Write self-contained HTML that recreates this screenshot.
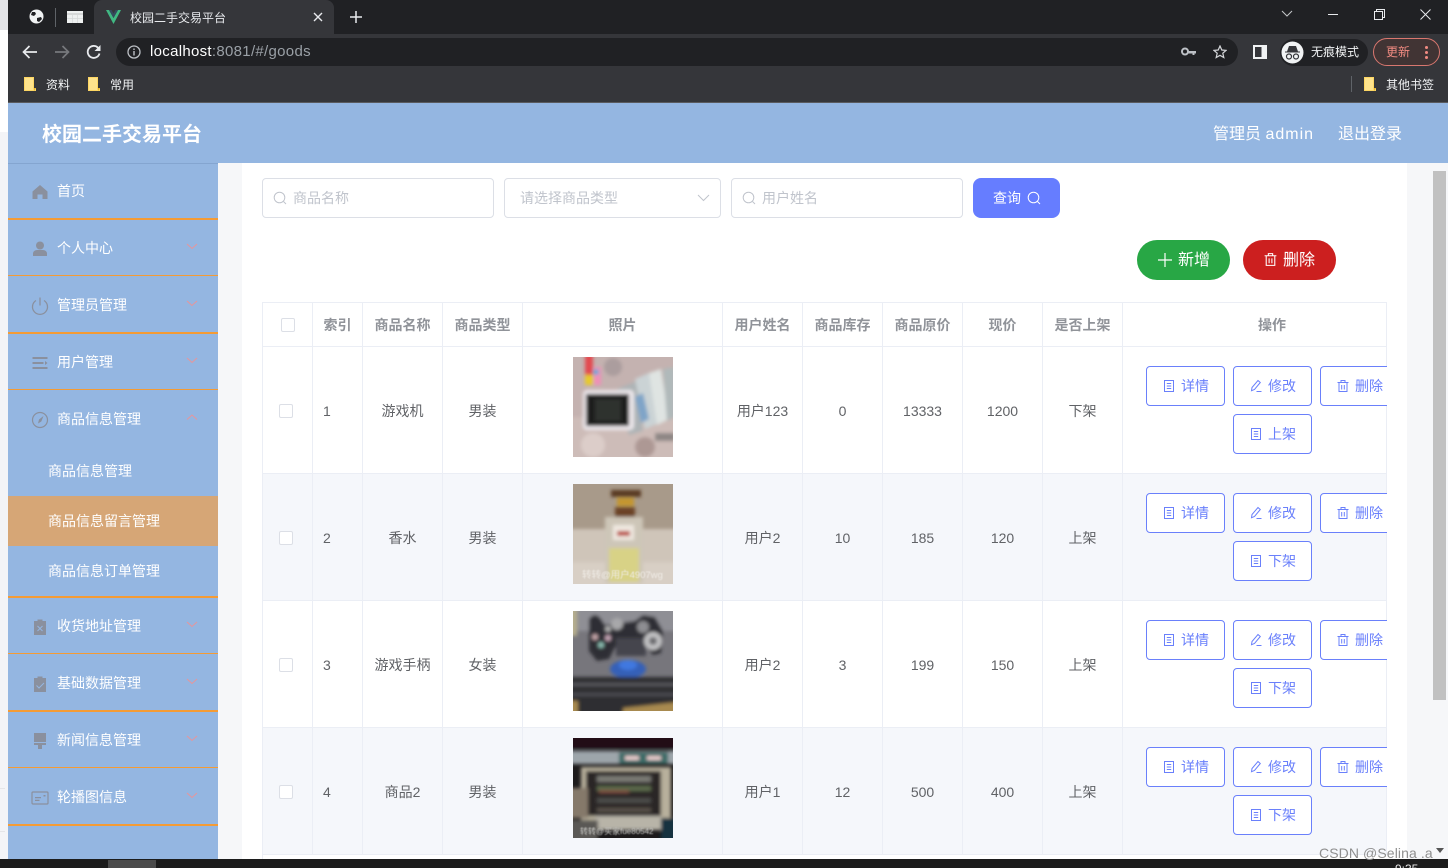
<!DOCTYPE html>
<html lang="zh"><head><meta charset="utf-8"><title>校园二手交易平台</title>
<style>
*{box-sizing:border-box}
html,body{margin:0;padding:0;width:1448px;height:868px;overflow:hidden;background:#f6f7f9;font-family:"Liberation Sans","Noto Sans CJK SC",sans-serif;color:#606266}
body{position:relative}
.a{position:absolute}
.t{position:absolute;white-space:nowrap}
.m{position:absolute;left:8px;width:210px;color:#fff;font-size:14px;height:20px;line-height:20px;white-space:nowrap}
.m span{position:absolute;left:49px;top:0}
.m svg.i{position:absolute;left:23px;top:2px;width:18px;height:18px;fill:#8a909e}
.m svg.ar{position:absolute;left:177px;top:1px;width:14px;height:14px;fill:none;stroke:#e8959a;stroke-width:1}
.ln{position:absolute;left:8px;width:210px;background:#f49b34}
.sub{position:absolute;left:8px;width:210px;height:50px;line-height:50px;padding-left:40px;color:#fff;font-size:14px}
.inp{position:absolute;top:178px;height:40px;border:1px solid #dcdfe6;border-radius:4px;background:#fff;color:#c0c4cc;font-size:14px;line-height:38px}
.th,.td{position:absolute;top:0;text-align:center;border-right:1px solid #ebeef5;font-size:14px}
.th{height:44px;line-height:45px;font-weight:700;color:#909399}
.td{height:127px;line-height:129px;color:#606266}
.row{position:absolute;left:263px;width:1124px;height:127px;border-bottom:1px solid #ebeef5;overflow:hidden}
.alt{background:#f5f7fb}
.w1{left:0;width:50px}.w2{left:50px;width:50px}.w3{left:100px;width:80px}.w4{left:180px;width:80px}.w5{left:260px;width:200px}.w6{left:460px;width:80px}.w7{left:540px;width:80px}.w8{left:620px;width:80px}.w9{left:700px;width:80px}.w10{left:780px;width:80px}.w11{left:860px;width:264px}
.cb{position:absolute;left:16px;top:57px;width:14px;height:14px;border:1px solid #dcdfe6;border-radius:2px;background:#fff}
.btn{position:absolute;width:79px;height:40px;border:1px solid #6a80fb;border-radius:4px;background:#fff;color:#6a80fb;font-size:14px;line-height:39px;white-space:nowrap}
.btn svg{position:absolute;left:15px;top:12px;width:14px;height:14px;fill:none;stroke:#6a80fb;stroke-width:1}
.btn span{position:absolute;left:34px;top:0}
.b1{left:883px;top:19px}.b2{left:970px;top:19px}.b3{left:1057px;top:19px}.b4{left:970px;top:67px}
.pic{position:absolute;left:310px;top:10px;width:100px;height:100px}
</style></head><body>
<svg width="0" height="0" style="position:absolute">
<defs>
<symbol id="doc" viewBox="0 0 14 14"><path d="M2.500 1.500h9v11h-9zM4.800 4.500h4.400M4.800 7h4.400M4.800 9.500h4.400"/></symbol>
<symbol id="pen" viewBox="0 0 14 14"><path d="M9 1.500l2.300 2-5.800 7-3 1.200.5-3.200zM7.500 12.500h5"/></symbol>
<symbol id="bin" viewBox="0 0 14 14"><path d="M1.500 3.500h11M3 3.500v9h8v-9M5 3.500V1.500h4v2M5.700 6v4.500M8.300 6v4.500"/></symbol>
<filter id="bl" x="-5%" y="-5%" width="110%" height="110%"><feGaussianBlur stdDeviation="1.900"/></filter>
<filter id="bt" x="-5%" y="-20%" width="110%" height="140%"><feGaussianBlur stdDeviation=".4"/></filter>
<clipPath id="cp"><rect width="100" height="100"/></clipPath>
</defs></svg>

<!-- outer strip -->
<div class="a" style="left:0;top:0;width:8px;height:868px;background:#f3f4f7"></div>
<div class="a" style="left:0;top:0;width:8px;height:30px;background:#e4e5e8"></div>
<div class="a" style="left:0;top:30px;width:8px;height:102px;background:#fff"></div>
<div class="a" style="left:0;top:788px;width:5px;height:1px;background:#e4e5e8"></div>
<div class="a" style="left:0;top:831px;width:5px;height:1px;background:#e4e5e8"></div>

<!-- browser chrome -->
<div class="a" style="left:8px;top:0;width:1440px;height:34px;background:#202124"></div>
<div class="a" style="left:8px;top:34px;width:1440px;height:68px;background:#35363a"></div>
<div class="a" style="left:8px;top:102px;width:1440px;height:1px;background:#5a5b5f"></div>
<div class="a" style="left:94px;top:0;width:240px;height:34px;background:#35363a;border-radius:8px 8px 0 0"></div>
<svg class="a" style="left:29px;top:9px" width="15" height="15" viewBox="0 0 15 15"><circle cx="7.500" cy="7.500" r="7" fill="#f1f3f4"/><path d="M3 3l3 0 1 2-2 2-3-1zM8 9l4-1 1 2-3 3-2-1z" fill="#202124"/></svg>
<div class="a" style="left:55px;top:8px;width:1px;height:19px;background:#5f6368"></div>
<svg class="a" style="left:67px;top:11px" width="16" height="12" viewBox="0 0 16 12"><rect width="16" height="12" fill="#eef0f0"/><path d="M0 3h16" stroke="#bdbfc1" stroke-width="1"/><path d="M5.500 3v9M10.500 3v9M0 7.500h16" stroke="#d5d7d8" stroke-width=".7"/></svg>
<svg class="a" style="left:106px;top:10px" width="15" height="14" viewBox="0 0 15 14"><path d="M0 0h3l4.500 8L12 0h3L7.500 14z" fill="#41b883"/><path d="M3 0h2.500l2 3.500L9.500 0H12L7.500 8z" fill="#35495e"/></svg>
<div class="t" style="left:130px;top:9px;font-size:12px;line-height:18px;color:#e8eaed;">校园二手交易平台</div>
<svg class="a" style="left:313px;top:12px" width="10" height="10" viewBox="0 0 10 10"><path d="M1 1l8 8M9 1l-8 8" stroke="#e8eaed" stroke-width="1.400"/></svg>
<svg class="a" style="left:350px;top:11px" width="12" height="12" viewBox="0 0 12 12"><path d="M6 0v12M0 6h12" stroke="#e8eaed" stroke-width="1.500"/></svg>
<svg class="a" style="left:22px;top:44px" width="16" height="16" viewBox="0 0 16 16"><path d="M15 8H2M7.500 2L1.500 8l6 6" fill="none" stroke="#e8eaed" stroke-width="1.700"/></svg>
<svg class="a" style="left:54px;top:44px" width="16" height="16" viewBox="0 0 16 16"><path d="M1 8h13M8.500 2l6 6-6 6" fill="none" stroke="#77797d" stroke-width="1.700"/></svg>
<svg class="a" style="left:86px;top:44px" width="16" height="16" viewBox="0 0 16 16"><path d="M13.500 9.500A6 6 0 1 1 12 3.700" fill="none" stroke="#e8eaed" stroke-width="1.800"/><path d="M14.500 1v6h-6z" fill="#e8eaed"/></svg>
<div class="a" style="left:116px;top:38px;width:1122px;height:28px;border-radius:14px;background:#202124"></div>
<svg class="a" style="left:127px;top:45px" width="14" height="14" viewBox="0 0 14 14"><circle cx="7" cy="7" r="6" fill="none" stroke="#bdc1c6" stroke-width="1.300"/><path d="M7 6v4.500M7 3.500v1.500" stroke="#bdc1c6" stroke-width="1.400"/></svg>
<div class="t" style="left:150px;top:43px;font-size:15px;line-height:18px;color:#9aa0a6;letter-spacing:.3px"><span style="color:#fff">localhost</span>:8081/#/goods</div>
<svg class="a" style="left:1181px;top:47px" width="15" height="9" viewBox="0 0 15 9"><circle cx="4" cy="4.500" r="3" fill="none" stroke="#bdc1c6" stroke-width="2"/><path d="M7 4h8v2.500h-1.500v1.500h-2V6.500H7z" fill="#bdc1c6"/></svg>
<svg class="a" style="left:1213px;top:45px" width="14" height="14" viewBox="0 0 14 14"><path d="M7 1l1.800 4 4.200.4-3.200 2.800 1 4.300L7 10.300 3.200 12.500l1-4.300L1 5.400 5.200 5z" fill="none" stroke="#d5d7da" stroke-width="1.200"/></svg>
<svg class="a" style="left:1253px;top:45px" width="14" height="14" viewBox="0 0 14 14"><rect width="14" height="14" fill="#f1f3f4"/><rect x="2" y="2" width="6.500" height="10" fill="#35363a"/></svg>
<div class="a" style="left:1280px;top:39px;width:88px;height:27px;border-radius:14px;background:#202124"></div>
<svg class="a" style="left:1281px;top:41px" width="23" height="23" viewBox="0 0 23 23"><circle cx="11.500" cy="11.500" r="11" fill="#f1f3f4"/><path d="M6 10.500l2-5.500h7l2 5.500h2v1H4v-1z" fill="#35363a"/><circle cx="8" cy="15.500" r="2.500" fill="none" stroke="#35363a" stroke-width="1.200"/><circle cx="15" cy="15.500" r="2.500" fill="none" stroke="#35363a" stroke-width="1.200"/></svg>
<div class="t" style="left:1311px;top:44px;font-size:12px;line-height:17px;color:#f1f3f4">无痕模式</div>
<div class="a" style="left:1373px;top:38px;width:67px;height:28px;border-radius:14px;border:1px solid #d9776f;background:#413434"></div>
<div class="t" style="left:1386px;top:44px;font-size:12px;line-height:17px;color:#f28b82">更新</div>
<div class="a" style="left:1425px;top:46px;width:3px;height:3px;border-radius:2px;background:#f28b82"></div>
<div class="a" style="left:1425px;top:51px;width:3px;height:3px;border-radius:2px;background:#f28b82"></div>
<div class="a" style="left:1425px;top:56px;width:3px;height:3px;border-radius:2px;background:#f28b82"></div>
<svg class="a" style="left:1281px;top:9px" width="12" height="10" viewBox="0 0 12 10"><path d="M1 2l5 5 5-5" fill="none" stroke="#c4c7c9" stroke-width="1"/></svg>
<div class="a" style="left:1328px;top:14px;width:10px;height:1px;background:#e8eaed"></div>
<svg class="a" style="left:1374px;top:9px" width="11" height="11" viewBox="0 0 11 11"><path d="M.5 2.500h8v8h-8zM2.500 2.500V.5h8v8H8.500" fill="none" stroke="#e8eaed"/></svg>
<svg class="a" style="left:1420px;top:9px" width="11" height="11" viewBox="0 0 11 11"><path d="M.5.5l10 10M10.500.5l-10 10" stroke="#e8eaed" stroke-width="1"/></svg>
<svg class="a" style="left:24px;top:77px" width="12" height="14" viewBox="0 0 12 14"><path d="M0 0h10v11h2v3H0z" fill="#fdd663"/><path d="M10 11h2l-2 3z" fill="#e3b32e"/><path d="M1 1h8v12H1z" fill="#fee38c"/></svg>
<div class="t" style="left:46px;top:77px;font-size:12px;line-height:17px;color:#f1f3f4">资料</div>
<svg class="a" style="left:88px;top:77px" width="12" height="14" viewBox="0 0 12 14"><path d="M0 0h10v11h2v3H0z" fill="#fdd663"/><path d="M10 11h2l-2 3z" fill="#e3b32e"/><path d="M1 1h8v12H1z" fill="#fee38c"/></svg>
<div class="t" style="left:110px;top:77px;font-size:12px;line-height:17px;color:#f1f3f4">常用</div>
<div class="a" style="left:1351px;top:76px;width:1px;height:16px;background:#5f6368"></div>
<svg class="a" style="left:1364px;top:77px" width="12" height="14" viewBox="0 0 12 14"><path d="M0 0h10v11h2v3H0z" fill="#fdd663"/><path d="M10 11h2l-2 3z" fill="#e3b32e"/><path d="M1 1h8v12H1z" fill="#fee38c"/></svg>
<div class="t" style="left:1386px;top:77px;font-size:12px;line-height:17px;color:#f1f3f4">其他书签</div>

<!-- app header -->
<div class="a" style="left:8px;top:103px;width:1440px;height:60px;background:#94b6e1"></div>
<div class="t" style="left:42px;top:121px;font-size:20px;line-height:28px;font-weight:700;color:#fff">校园二手交易平台</div>
<div class="t" style="left:1213px;top:123px;font-size:16px;line-height:23px;color:#fff">管理员 <span style="letter-spacing:1px">admin</span></div>
<div class="t" style="left:1338px;top:123px;font-size:16px;line-height:23px;color:#fff">退出登录</div>

<!-- sidebar -->
<div class="a" style="left:8px;top:163px;width:210px;height:696px;background:#94b6e1"></div>
<div class="a" style="left:8px;top:163px;width:210px;height:1px;background:#84a5d0"></div>
<div class="ln" style="top:218px;height:2px"></div>
<div class="ln" style="top:275px;height:1px"></div>
<div class="ln" style="top:332px;height:2px"></div>
<div class="ln" style="top:389px;height:1px"></div>
<div class="ln" style="top:596px;height:2px"></div>
<div class="ln" style="top:653px;height:1px"></div>
<div class="ln" style="top:710px;height:2px"></div>
<div class="ln" style="top:767px;height:1px"></div>
<div class="ln" style="top:824px;height:2px"></div>

<div class="m" style="top:181px"><svg class="i" viewBox="0 0 18 18"><path d="M9 2l7.500 6.500V16h-5v-4.500h-5V16h-5V8.500z"/></svg><span>首页</span></div>
<div class="m" style="top:238px"><svg class="i" viewBox="0 0 18 18"><circle cx="9" cy="5.500" r="4"/><path d="M2 16v-2.500c0-2 2-3.500 4-3.500h6c2 0 4 1.500 4 3.500V16z"/></svg><span>个人中心</span><svg class="ar" viewBox="0 0 14 14"><path d="M2 5l5 4.500L12 5"/></svg></div>
<div class="m" style="top:295px"><svg class="i" viewBox="0 0 18 18" style="fill:none;stroke:#8a909e;stroke-width:1.300"><path d="M5 3.500a7.500 7.500 0 1 0 8 0M9 0.500v8"/></svg><span>管理员管理</span><svg class="ar" viewBox="0 0 14 14"><path d="M2 5l5 4.500L12 5"/></svg></div>
<div class="m" style="top:352px"><svg class="i" viewBox="0 0 18 18"><path d="M1.500 3h15v2h-15zM1.500 8h11v2h-11zM1.500 13h15v2h-15zM14 7l2.500 2L14 11z"/></svg><span>用户管理</span><svg class="ar" viewBox="0 0 14 14"><path d="M2 5l5 4.500L12 5"/></svg></div>
<div class="m" style="top:409px"><svg class="i" viewBox="0 0 18 18"><circle cx="9" cy="9" r="7.500" fill="none" stroke="#8a909e" stroke-width="1.200"/><path d="M12.500 5l-2.200 5.500L7 12.500l1-4z"/></svg><span>商品信息管理</span><svg class="ar" viewBox="0 0 14 14"><path d="M2 9.500L7 5l5 4.500"/></svg></div>

<div class="sub" style="top:446px">商品信息管理</div>
<div class="sub" style="top:496px;background:#d6a676">商品信息留言管理</div>
<div class="sub" style="top:546px">商品信息订单管理</div>

<div class="m" style="top:616px"><svg class="i" viewBox="0 0 18 18"><path d="M3 3h3.500V1.500h5V3H15v14H3z"/><path d="M6.500 8l5 5M11.500 8l-5 5" stroke="#94b6e1" stroke-width="1"/></svg><span>收货地址管理</span><svg class="ar" viewBox="0 0 14 14"><path d="M2 5l5 4.500L12 5"/></svg></div>
<div class="m" style="top:673px"><svg class="i" viewBox="0 0 18 18"><path d="M3 3h3.500V1.500h5V3H15v14H3z"/><path d="M5.500 10.500l2.500 2.500 5-5" fill="none" stroke="#94b6e1" stroke-width="1"/></svg><span>基础数据管理</span><svg class="ar" viewBox="0 0 14 14"><path d="M2 5l5 4.500L12 5"/></svg></div>
<div class="m" style="top:730px"><svg class="i" viewBox="0 0 18 18"><path d="M3 1h12v9H3zM3 11h12v2h-4v4H7v-4H3z"/></svg><span>新闻信息管理</span><svg class="ar" viewBox="0 0 14 14"><path d="M2 5l5 4.500L12 5"/></svg></div>
<div class="m" style="top:787px"><svg class="i" viewBox="0 0 18 18"><rect x="1" y="3" width="16" height="12" rx="1" fill="none" stroke="#8a909e" stroke-width="1.200"/><path d="M4 8h6v1.200H4zM4 10.800h4.500V12H4zM12.500 6h2v1.500h-2z"/></svg><span>轮播图信息</span><svg class="ar" viewBox="0 0 14 14"><path d="M2 5l5 4.500L12 5"/></svg></div>

<!-- content -->
<div class="a" style="left:242px;top:163px;width:1165px;height:696px;background:#fff"></div>

<div class="inp" style="left:262px;width:232px;padding-left:30px">商品名称</div>
<svg class="a" style="left:273px;top:191px" width="14" height="14" viewBox="0 0 14 14"><circle cx="6.500" cy="6.500" r="5.300" fill="none" stroke="#c0c4cc" stroke-width="1"/><path d="M10.500 10.500l2.500 2.500" stroke="#c0c4cc" stroke-width="1"/></svg>
<div class="inp" style="left:504px;width:217px;padding-left:15px">请选择商品类型</div>
<svg class="a" style="left:697px;top:193px" width="13" height="10" viewBox="0 0 13 10"><path d="M1 2l5.500 5.500L12 2" fill="none" stroke="#c0c4cc" stroke-width="1"/></svg>
<div class="inp" style="left:731px;width:232px;padding-left:30px">用户姓名</div>
<svg class="a" style="left:742px;top:191px" width="14" height="14" viewBox="0 0 14 14"><circle cx="6.500" cy="6.500" r="5.300" fill="none" stroke="#c0c4cc" stroke-width="1"/><path d="M10.500 10.500l2.500 2.500" stroke="#c0c4cc" stroke-width="1"/></svg>
<div class="a" style="left:973px;top:178px;width:87px;height:40px;border-radius:8px;background:#667dff"></div>
<div class="t" style="left:993px;top:188px;font-size:14px;line-height:20px;color:#fff">查询</div>
<svg class="a" style="left:1027px;top:191px" width="14" height="14" viewBox="0 0 14 14"><circle cx="6.500" cy="6.500" r="5.300" fill="none" stroke="#fff" stroke-width="1"/><path d="M10.500 10.500l2.500 2.500" stroke="#fff" stroke-width="1"/></svg>

<div class="a" style="left:1137px;top:240px;width:93px;height:40px;border-radius:20px;background:#28a745"></div>
<svg class="a" style="left:1158px;top:253px" width="14" height="14" viewBox="0 0 14 14"><path d="M7 0v14M0 7h14" stroke="#fff" stroke-width="1.200"/></svg>
<div class="t" style="left:1178px;top:251px;font-size:16px;line-height:20px;color:#fff">新增</div>
<div class="a" style="left:1243px;top:240px;width:93px;height:40px;border-radius:20px;background:#cc1f1f"></div>
<svg class="a" style="left:1263px;top:252px" width="15" height="15" viewBox="0 0 14 14"><path d="M1.500 3.500h11M3 3.500v9h8v-9M5 3.500V1.500h4v2M5.700 6v4.500M8.300 6v4.500" fill="none" stroke="#fff" stroke-width="1"/></svg>
<div class="t" style="left:1283px;top:251px;font-size:16px;line-height:20px;color:#fff">删除</div>

<!-- table -->
<div class="a" style="left:262px;top:302px;width:1125px;height:557px;border-left:1px solid #ebeef5;border-top:1px solid #ebeef5;background:#fff"></div>
<div class="a" style="left:263px;top:303px;width:1124px;height:44px;border-bottom:1px solid #ebeef5">
<div class="th w1"><div class="cb" style="left:18px;top:15px"></div></div><div class="th w2">索引</div><div class="th w3">商品名称</div><div class="th w4">商品类型</div><div class="th w5">照片</div><div class="th w6">用户姓名</div><div class="th w7">商品库存</div><div class="th w8">商品原价</div><div class="th w9">现价</div><div class="th w10">是否上架</div><div class="th w11" style="padding-left:35px">操作</div>
</div>

<div class="row" style="top:347px">
<div class="td w1"><div class="cb"></div></div><div class="td w2" style="text-align:left;padding-left:10px">1</div><div class="td w3">游戏机</div><div class="td w4">男装</div><div class="td w5"></div><div class="td w6">用户123</div><div class="td w7">0</div><div class="td w8">13333</div><div class="td w9">1200</div><div class="td w10">下架</div><div class="td w11"></div>
<svg class="pic" viewBox="0 0 100 100"><g clip-path="url(#cp)"><rect width="100" height="100" fill="#c4b2b0"/><g filter="url(#bl)"><rect x="-5" y="60" width="110" height="45" fill="#cdbcb8"/><circle cx="40" cy="10" r="9" fill="#ab9d9e"/><circle cx="20" cy="88" r="12" fill="#dccdc9"/><circle cx="72" cy="90" r="10" fill="#ad9894"/><path d="M44 32L64 24l6 50-14 4z" fill="#aeb4b6"/><path d="M62 22l14-6 10 50-14 6z" fill="#cbd3d5"/><path d="M76 16l12-4 8 50-12 6z" fill="#dfe4e2"/><path d="M90 12l12-2v50l-8 4z" fill="#b0b9ba"/><path d="M62 40l8-4 6 26-8 4z" fill="#7fa4c8"/><path d="M82 76h20v8H82z" fill="#8e8785"/><rect x="12" y="-3" width="8" height="21" fill="#e3494f"/><rect x="12" y="18" width="8" height="10" fill="#e8c92c"/><rect x="21" y="10" width="7" height="18" fill="#f08fb8"/><circle cx="23" cy="15" r="3" fill="#5fa8d8"/><rect x="10" y="33" width="51" height="40" rx="4" fill="#ece7eb"/><rect x="13" y="37" width="43" height="32" fill="#1b1d1b"/><rect x="22" y="42" width="26" height="22" fill="#2e302e"/></g></g></svg>
<div class="btn b1"><svg><use href="#doc"/></svg><span>详情</span></div><div class="btn b2"><svg><use href="#pen"/></svg><span>修改</span></div><div class="btn b3"><svg><use href="#bin"/></svg><span>删除</span></div><div class="btn b4"><svg><use href="#doc"/></svg><span>上架</span></div>
</div>

<div class="row alt" style="top:474px">
<div class="td w1"><div class="cb"></div></div><div class="td w2" style="text-align:left;padding-left:10px">2</div><div class="td w3">香水</div><div class="td w4">男装</div><div class="td w5"></div><div class="td w6">用户2</div><div class="td w7">10</div><div class="td w8">185</div><div class="td w9">120</div><div class="td w10">上架</div><div class="td w11"></div>
<svg class="pic" viewBox="0 0 100 100"><g clip-path="url(#cp)"><rect width="100" height="100" fill="#a89a8a"/><g filter="url(#bl)"><rect x="-5" y="45" width="110" height="60" fill="#cfc5b9"/><rect x="-5" y="78" width="110" height="27" fill="#d8cfc5"/><rect x="38" y="6" width="30" height="7" fill="#5a3a22"/><rect x="44" y="14" width="17" height="8" fill="#c4962e"/><rect x="42" y="23" width="20" height="10" fill="#6c4225"/><rect x="32" y="33" width="38" height="66" fill="#cdc6b8"/><rect x="40" y="41" width="21" height="15" fill="#efe8e0"/><rect x="44" y="47" width="13" height="5" fill="#bb4a40"/><rect x="36" y="64" width="30" height="34" fill="#d8d286"/></g><text x="9" y="94" font-size="9.500" fill="#f0ece6" filter="url(#bt)" font-family="Liberation Sans,Noto Sans CJK SC,sans-serif">转转@用户4907wg</text></g></svg>
<div class="btn b1"><svg><use href="#doc"/></svg><span>详情</span></div><div class="btn b2"><svg><use href="#pen"/></svg><span>修改</span></div><div class="btn b3"><svg><use href="#bin"/></svg><span>删除</span></div><div class="btn b4"><svg><use href="#doc"/></svg><span>下架</span></div>
</div>

<div class="row" style="top:601px">
<div class="td w1"><div class="cb"></div></div><div class="td w2" style="text-align:left;padding-left:10px">3</div><div class="td w3">游戏手柄</div><div class="td w4">女装</div><div class="td w5"></div><div class="td w6">用户2</div><div class="td w7">3</div><div class="td w8">199</div><div class="td w9">150</div><div class="td w10">上架</div><div class="td w11"></div>
<svg class="pic" viewBox="0 0 100 100"><g clip-path="url(#cp)"><rect width="100" height="100" fill="#77767c"/><g filter="url(#bl)"><rect x="-5" y="-5" width="110" height="25" fill="#8f8f95"/><rect x="-5" y="-5" width="9" height="30" fill="#b5ad8d"/><path d="M16 8q6-8 12 0l4 6 30-4 8-6 12 2 8 14-2 22-8 2-6-8H42l-6 12-12 2-8-10z" fill="#2f2f34"/><ellipse cx="55" cy="58" rx="18" ry="9" fill="#3560b8"/><ellipse cx="55" cy="54" rx="9" ry="5" fill="#3f78e0"/><rect x="43" y="27" width="30" height="18" fill="#45454d"/><circle cx="44" cy="13" r="6" fill="#a8a8aa"/><circle cx="70" cy="16" r="6" fill="#8e8e92"/><circle cx="80" cy="30" r="9" fill="#c2c2c4"/><circle cx="80" cy="30" r="4" fill="#6a6a6e"/><circle cx="22" cy="26" r="3" fill="#c8a8ac"/><circle cx="35" cy="18" r="3" fill="#b0b0b0"/><circle cx="28" cy="34" r="3" fill="#8ec0b4"/><circle cx="35" cy="27" r="3" fill="#c8a8b8"/><rect x="-5" y="66" width="110" height="39" fill="#2f2f31"/><rect x="-5" y="72" width="110" height="3" fill="#5a5a5f"/><rect x="-5" y="82" width="110" height="3" fill="#4e4e52"/><path d="M-5 90h10v15H-5zM50 97l55-6v14H50z" fill="#a88a50"/></g></g></svg>
<div class="btn b1"><svg><use href="#doc"/></svg><span>详情</span></div><div class="btn b2"><svg><use href="#pen"/></svg><span>修改</span></div><div class="btn b3"><svg><use href="#bin"/></svg><span>删除</span></div><div class="btn b4"><svg><use href="#doc"/></svg><span>下架</span></div>
</div>

<div class="row alt" style="top:728px">
<div class="td w1"><div class="cb"></div></div><div class="td w2" style="text-align:left;padding-left:10px">4</div><div class="td w3">商品2</div><div class="td w4">男装</div><div class="td w5"></div><div class="td w6">用户1</div><div class="td w7">12</div><div class="td w8">500</div><div class="td w9">400</div><div class="td w10">上架</div><div class="td w11"></div>
<svg class="pic" viewBox="0 0 100 100"><g clip-path="url(#cp)"><rect width="100" height="100" fill="#1d1b1c"/><g filter="url(#bl)"><rect x="-5" y="-5" width="110" height="16" fill="#240a12"/><rect x="-5" y="13" width="110" height="13" fill="#9da5aa"/><rect x="46" y="14" width="49" height="12" fill="#3b6b66"/><rect x="52" y="18" width="14" height="4" fill="#f0d0d0"/><rect x="74" y="18" width="14" height="4" fill="#f0d0d0"/><rect x="8" y="29" width="90" height="62" fill="#b8b09c"/><rect x="13" y="33" width="75" height="45" fill="#2c2826"/><rect x="24" y="38" width="54" height="6" fill="#7a7a74"/><rect x="24" y="48" width="54" height="5" fill="#5c6a4c"/><rect x="26" y="52" width="30" height="3" fill="#805040"/><rect x="24" y="60" width="54" height="5" fill="#4c4c4a"/><rect x="24" y="70" width="54" height="4" fill="#5a524c"/><rect x="-5" y="50" width="20" height="30" fill="#85796a"/><rect x="22" y="78" width="66" height="14" fill="#b8b4a8"/><rect x="-5" y="82" width="30" height="23" fill="#5a5854"/><rect x="88" y="80" width="17" height="25" fill="#123240"/></g><text x="7" y="96" font-size="8" fill="#c8c8c4" filter="url(#bt)" font-family="Liberation Sans,Noto Sans CJK SC,sans-serif">转转@买家fue80542</text></g></svg>
<div class="btn b1"><svg><use href="#doc"/></svg><span>详情</span></div><div class="btn b2"><svg><use href="#pen"/></svg><span>修改</span></div><div class="btn b3"><svg><use href="#bin"/></svg><span>删除</span></div><div class="btn b4"><svg><use href="#doc"/></svg><span>下架</span></div>
</div>

<!-- scrollbar -->
<div class="a" style="left:1433px;top:171px;width:13px;height:529px;background:#c1c1c1"></div>

<!-- bottom -->
<div class="a" style="left:0;top:859px;width:1448px;height:9px;background:#1c1c1c"></div>
<div class="a" style="left:108px;top:860px;width:48px;height:8px;background:#4b4b4b"></div>
<div class="t" style="left:1395px;top:862px;font-size:12px;line-height:14px;color:#e8e8e8">9:35</div>
<div class="t" style="left:1319px;top:844px;font-size:14px;line-height:18px;color:#8f8f8f;letter-spacing:.1px">CSDN @Selina .a</div>
<div class="a" style="left:1436px;top:848px;width:0;height:0;border-left:4px solid transparent;border-right:4px solid transparent;border-top:5px solid #555"></div>
</body></html>
